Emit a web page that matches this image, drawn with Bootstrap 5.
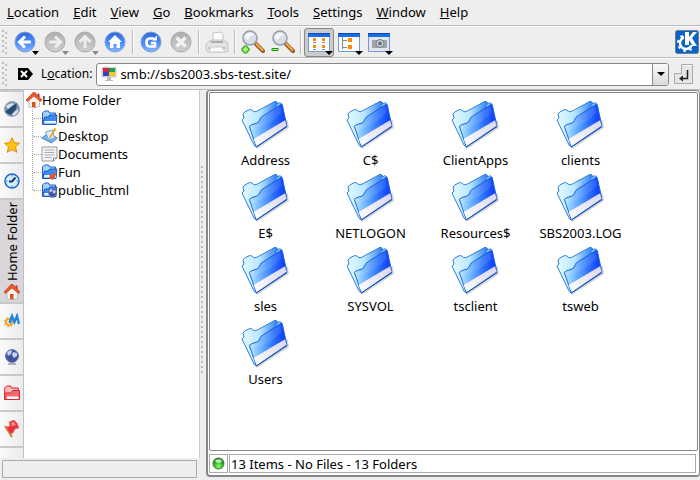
<!DOCTYPE html>
<html lang="en">
<head>
<meta charset="utf-8">
<meta name="viewport" content="width=device-width, initial-scale=1">
<title>smb://sbs2003.sbs-test.site/ - Konqueror</title>
<link href="https://cdn.jsdelivr.net/npm/bootstrap@5.3.0/dist/css/bootstrap.min.css" rel="stylesheet">
<style>
body{font:13px/18px "Noto Sans","Open Sans",sans-serif;color:#000;background:#eeeeee}
button{font:inherit;color:inherit;background:none;border:0;padding:0}
svg{display:block;flex:none}
a{color:inherit;text-decoration:none}
.menubar{gap:14px;padding:3px 7px 4px;border-bottom:1px solid #bbb;background:#eee}
.bar{border-top:1px solid #fafafa;border-bottom:1px solid #bbb}
.toolbar-main{height:32px}
.place{height:32px}
.grip{width:6px;margin:3px 2px;background:radial-gradient(circle at 1px 1px,#bbb 1px,transparent 1px) 0 0/6px 5px,radial-gradient(circle at 4px 3px,#c4c4c4 1px,transparent 1px) 0 0/6px 5px}
.tool{width:30px;height:29px;border-radius:3px;border:1px solid transparent;display:flex;align-items:center;justify-content:center}
.tool.pressed{background:#ccc;border-color:#888}
.rule{width:2px;height:24px;margin:0 2px;border-left:1px solid #bbb;border-right:1px solid #fafafa}
.kde{margin-right:1px}
.combo{height:23px;border:1px solid #888;border-radius:3px;background:#fff}
.combo input{border:0;outline:0;background:transparent;min-width:0;padding:0 0 0 3px;font:inherit;color:inherit}
.combo button{width:16px;background:linear-gradient(#fafafa,#dcdadc);border-left:1px solid #888}
.enter{margin:0 6px 0 5px}
.small-label{font-size:12px}
.pane-area{min-height:0}
.tabs{width:24px;border-right:1px solid #c0c0c0}
.tab{width:23px;height:36px;border-top:2px solid #c9c7c9;background:linear-gradient(90deg,#fafafa,#eceaec);display:flex;align-items:center;justify-content:center}
.tab.open{height:104px;background:#d8d6d8;gap:2px;flex-direction:column}
.tab.open span{writing-mode:vertical-rl;transform:rotate(180deg);line-height:18px}
.left-pane{width:200px}
.tree{background:#fff;padding:1px 0 0 2px;border-right:1px solid #ccc}
.tree ul{margin:0 0 0 6px;padding:0;list-style:none;border-left:1px dotted #aaa;height:81px}
.tree li{height:18px}
.tree li::before{content:"";width:8px;border-top:1px dotted #aaa}
.left-status{height:19px;margin:2px 3px 2px 2px;border:1px solid #aaa;border-radius:1px}
.splitter{width:6px;background:radial-gradient(circle at 2px 1px,#bbb 1px,transparent 1px) 0 0/6px 5px;margin:76px 0 104px}
.right-pane{border:1px solid #888;border-bottom-width:2px;border-left-width:2px;border-radius:4px;background:#fff;padding:1px;margin-bottom:3px}
.files{border:1px solid #888;border-radius:2px;padding:5px 3px;overflow:auto}
.file{width:105px}
.file svg{margin-bottom:1px}
.file span{margin-bottom:2px}
.state{gap:1px;margin:3px 2px 1px 0}
.cell{height:19px;border:1px solid #aaa;padding:0 1px}
.cell.lamp{padding:0 2px}
</style>
</head>
<body class="vh-100 d-flex flex-column overflow-hidden">
<svg width="0" height="0" class="position-absolute" aria-hidden="true">
<defs>
<linearGradient id="blue" x1="0" y1="0" x2="0" y2="1"><stop offset="0" stop-color="#2f66d8"/><stop offset=".55" stop-color="#4a8cff"/><stop offset="1" stop-color="#83b5ff"/></linearGradient>
<linearGradient id="grey" x1="0" y1="0" x2="0" y2="1"><stop offset="0" stop-color="#adadad"/><stop offset="1" stop-color="#d0d0d0"/></linearGradient>
<linearGradient id="fold" x1="0" y1=".5" x2="1" y2=".5"><stop offset="0" stop-color="#bdeaff"/><stop offset=".3" stop-color="#6fb4ff"/><stop offset=".65" stop-color="#2b70fb"/><stop offset="1" stop-color="#0732ff"/></linearGradient>
<linearGradient id="back" x1="0" y1="0" x2="1" y2="0"><stop offset="0" stop-color="#e4fbff"/><stop offset=".5" stop-color="#b8e6ff"/><stop offset="1" stop-color="#2c7df0"/></linearGradient>
<linearGradient id="band" x1="0" y1="1" x2="1" y2="0"><stop offset="0" stop-color="#fff"/><stop offset="1" stop-color="#d9d5ea"/></linearGradient>
<radialGradient id="led" cx=".5" cy=".75" r=".7"><stop offset="0" stop-color="#8dff6a"/><stop offset=".6" stop-color="#2fae22"/><stop offset="1" stop-color="#0b6a08"/></radialGradient>
<symbol id="folder" viewBox="117 42 156 156">
<path d="M140 140L168 195L264 132L260 108Z" fill="#777" opacity=".3"/>
<path d="M123 108L129 102L126 90Q128 84 145 77Q152 75 157 82Q162 85 169 81L222 52L228 54L231 62L166 188L160 185Z" fill="url(#back)" stroke="#2d7fdc" stroke-width="3"/>
<path d="M224 64L236 56L243 60L246 75L230 80Z" fill="#8ccaff" stroke="#1f67d4" stroke-width="2.5"/>
<path d="M166 189L145 127Q148 122 168 117Q175 113 178 103Q180 98 187 95L240 61L244 64L258 127Z" fill="url(#fold)" stroke="#1c66d8" stroke-width="3"/>
<path d="M158 165L252 109L257 125L167 186Z" fill="url(#band)"/>
<path d="M185 99L238 66L242 85Q215 120 152 138L149 128Q170 121 176 116Z" fill="#fff" opacity=".1"/>
<path d="M166 189L258 128" stroke="#1c50b8" stroke-width="3"/>
</symbol>
<symbol id="minifolder" viewBox="0 0 16 16"><path d="M1 14V3L3 1h4l1 2h6v3" fill="#a7d4ff" stroke="#1c5fc8"/><path d="M1 14.500L3 7h4l1-2h7.500L14.500 14.500Z" fill="#3c8aef" stroke="#1b59c4"/><path d="M3 11h11.500v2.500H2.500z" fill="#eef4ff"/></symbol>
<symbol id="house" viewBox="0 0 16 16"><path d="M3 8v7l4 1 6.500-1.500V8L8 2z" fill="#f8f6f4" stroke="#aaa" stroke-width=".7"/><path d="M11.500 1.500h2v4h-2z" fill="#c33"/><path d="M0 8L7 .5 9 .5 16 8 14.500 9.500 8 4 1.500 9.500z" fill="#f0572a" stroke="#b83212" stroke-width=".6"/><path d="M6 10h3.500v5.700L6 15z" fill="#d75418"/></symbol>
<symbol id="globe" viewBox="0 0 16 16"><circle cx="8" cy="7" r="6.500" fill="#3c559d" stroke="#7181b4"/><path d="M3 4Q6 0 8 2L7 5 4 7zM9 3l4 1 0 3-3 2-2-3z" fill="#c8d4f2"/><path d="M4 15h8" stroke="#999" stroke-width="1.500"/></symbol>
<symbol id="lens" viewBox="0 0 24 24"><path d="M15 14L22 21" stroke="#8e5b2e" stroke-width="4" stroke-linecap="round"/><path d="M15.500 14L21.500 20" stroke="#ffad45" stroke-width="2" stroke-linecap="round"/><circle cx="9" cy="8" r="7" fill="#d9dfe8" stroke="#999da8" stroke-width="1.500"/><path d="M4 8a5 5 0 0 1 9-3Q9 5 7 10z" fill="#fff" opacity=".8"/></symbol>
<symbol id="window" viewBox="0 0 24 24"><path d="M1.500 2.500h21v18h-21z" fill="#fafcff" stroke="#6f9bd8"/><path d="M1 2h22v4H1z" fill="#1b6ae6"/><path d="M1 2h22v1H1z" fill="#0b48b8"/></symbol>
<symbol id="arrow" viewBox="0 0 8 4"><path d="M0 0h8L4 4z"/></symbol>
</defs>
</svg>

<nav class="menubar d-flex flex-shrink-0" aria-label="Menu">
<button type="button"><u>L</u>ocation</button><button type="button"><u>E</u>dit</button><button type="button"><u>V</u>iew</button><button type="button"><u>G</u>o</button><button type="button"><u>B</u>ookmarks</button><button type="button"><u>T</u>ools</button><button type="button"><u>S</u>ettings</button><button type="button"><u>W</u>indow</button><button type="button"><u>H</u>elp</button>
</nav>

<div class="bar toolbar-main d-flex align-items-center flex-shrink-0" role="toolbar" aria-label="Main toolbar">
<div class="grip align-self-stretch"></div>
<button type="button" class="tool" aria-label="Back"><svg width="28" height="26" viewBox="0 0 28 26"><circle cx="14" cy="13" r="10" fill="url(#blue)" stroke="#7d9fd8"/><path d="M20 13H9M14 7.500L8.500 13l5.500 5.500" fill="none" stroke="#fff" stroke-width="3"/><path d="M21 22h7l-3.500 4z"/></svg></button>
<button type="button" class="tool" aria-label="Forward" disabled><svg width="28" height="26" viewBox="0 0 28 26"><circle cx="14" cy="13" r="10" fill="url(#grey)" stroke="#aaa"/><path d="M8 13h11M14 7.500l5.500 5.500-5.500 5.500" fill="none" stroke="#eee" stroke-width="3"/><path d="M21 22h7l-3.500 4z" fill="#888"/></svg></button>
<button type="button" class="tool" aria-label="Up" disabled><svg width="28" height="26" viewBox="0 0 28 26"><circle cx="14" cy="13" r="10" fill="url(#grey)" stroke="#aaa"/><path d="M14 19V8M8.500 13L14 7.500l5.500 5.500" fill="none" stroke="#eee" stroke-width="3"/><path d="M21 22h7l-3.500 4z" fill="#888"/></svg></button>
<button type="button" class="tool" aria-label="Home"><svg width="28" height="26" viewBox="0 0 28 26"><circle cx="14" cy="13" r="10" fill="url(#blue)" stroke="#7d9fd8"/><path d="M14 6l7 7h-2v6h-3.500v-4h-3v4H9v-6H7z" fill="#fff"/></svg></button>
<div class="rule"></div>
<button type="button" class="tool" aria-label="Reload"><svg width="28" height="26" viewBox="0 0 28 26"><circle cx="14" cy="13" r="10" fill="url(#blue)" stroke="#7d9fd8"/><path d="M17 9.500H12.500Q9.500 9.500 9.500 13.500T13 17.500h5V14h-4" fill="none" stroke="#fff" stroke-width="2.600"/><path d="M20 6.500v5h-5z" fill="#fff"/></svg></button>
<button type="button" class="tool" aria-label="Stop" disabled><svg width="28" height="26" viewBox="0 0 28 26"><circle cx="14" cy="13" r="10" fill="url(#grey)" stroke="#aaa"/><path d="M9.500 8.500l9 9M18.500 8.500l-9 9" stroke="#f2f2f2" stroke-width="3.500"/></svg></button>
<div class="rule"></div>
<button type="button" class="tool" aria-label="Print" disabled><svg width="24" height="24" viewBox="0 0 24 24"><path d="M8 11V3l8-1 2 2v8" fill="#fafafa" stroke="#c4c4c4"/><path d="M4 11l3-1h11l4 2 1 3v6l-2 1H3l-2-2v-5z" fill="#e3e3e3" stroke="#c4c4c4"/><path d="M6 12h12" stroke="#999" stroke-width="1.500"/><path d="M3 17h18v2H3z" fill="#c6c6c6"/><path d="M6 17h11l3 5H4z" fill="#fafafa" stroke="#ccc"/></svg></button>
<div class="rule"></div>
<button type="button" class="tool" aria-label="Zoom in"><svg width="24" height="24" viewBox="0 0 24 24"><use href="#lens"/><path d="M3 16h3v2h2v3H6v2H3v-2H1v-3h2z" fill="#b7ff78" stroke="#12990b"/></svg></button>
<button type="button" class="tool" aria-label="Zoom out"><svg width="24" height="24" viewBox="0 0 24 24"><use href="#lens"/><path d="M1 18.500h6v2H1z" fill="#b7ff78" stroke="#12990b"/></svg></button>
<div class="rule"></div>
<button type="button" class="tool pressed" aria-label="Icon view" aria-pressed="true"><svg width="28" height="26" viewBox="0 0 28 26"><svg x="2" y="2" width="24" height="24"><use href="#window"/></svg><path d="M8 9h3v3H8zM17 9h3v3h-3zM8 16h3v3H8zM17 16h3v3h-3z" fill="#ff8a0a"/><path d="M8 13.500h3M17 13.500h3M8 20.500h3M17 20.500h3" stroke="#888"/><path d="M20 22h8l-4 4z"/></svg></button>
<button type="button" class="tool" aria-label="Tree view"><svg width="28" height="26" viewBox="0 0 28 26"><svg x="2" y="2" width="24" height="24"><use href="#window"/></svg><path d="M7.500 8v12M7.500 11.500H12M7.500 18.500H12" fill="none" stroke="#888"/><path d="M13 9h4v4h-4zM13 16h4v4h-4z" fill="#ff8a0a"/><path d="M20 22h8l-4 4z"/></svg></button>
<button type="button" class="tool" aria-label="Photo view"><svg width="28" height="26" viewBox="0 0 28 26"><svg x="2" y="2" width="24" height="24"><use href="#window"/></svg><path d="M4 8h20v14H4z" fill="#e4e6ea"/><path d="M7 11h15v8H7z" fill="#a2a6ac"/><circle cx="15" cy="14.500" r="4" fill="#cfd6e0" stroke="#777"/><circle cx="15" cy="14.500" r="2" fill="#5c7190"/><path d="M20 22h8l-4 4z"/></svg></button>
<svg class="kde ms-auto" width="24" height="24" viewBox="0 0 24 24" role="img" aria-label="KDE"><rect x=".5" y=".5" width="23" height="23" rx="2" fill="#0a63c8" stroke="#6f7f91"/><circle cx="11" cy="13" r="6" fill="none" stroke="#fff" stroke-width="2.500"/><circle cx="11" cy="13" r="8" fill="none" stroke="#fff" stroke-width="2" stroke-dasharray="2.600 3.700"/><path d="M9 1h13v14H9z" fill="#0a63c8"/><path d="M10 2h4v5l4-5h4l-5 6 5 8h-4l-4-6v5h-4z" fill="#fff"/></svg>
</div>

<div class="bar place d-flex align-items-center flex-shrink-0">
<div class="grip align-self-stretch"></div>
<button type="button" class="ms-2" aria-label="Clear location"><svg width="15" height="12" viewBox="0 0 15 12"><path d="M0 0h10l5 6-5 6H0z"/><path d="M3 3l6 6M9 3L3 9" stroke="#fff" stroke-width="2"/></svg></button>
<label for="url" class="small-label ms-2 me-1">L<u>o</u>cation:</label>
<div class="combo d-flex flex-fill align-items-center overflow-hidden">
<svg class="ms-1" width="16" height="16" viewBox="0 0 16 16"><path d="M1 2Q4 0 8 1.500T15 1v10H1z" fill="#ddd" stroke="#aaa" stroke-width=".6"/><path d="M2 2h6v4H2z" fill="#d2214c"/><path d="M8 2h6v4H8z" fill="#18a04a"/><path d="M2 6h6v4H2z" fill="#3046c4"/><path d="M8 6h6v4H8z" fill="#f2c916"/><path d="M6 11h4v3H6zM4 14h8v1H4z" fill="#bbb"/></svg>
<input id="url" class="flex-fill" type="text" value="smb://sbs2003.sbs-test.site/">
<button type="button" class="align-self-stretch d-flex align-items-center justify-content-center" aria-label="History"><svg width="8" height="4"><use href="#arrow"/></svg></button>
</div>
<button type="button" class="enter" aria-label="Go"><svg width="20" height="20" viewBox="0 0 20 20"><path d="M7.500.5h11v19H.5v-10h7z" fill="#e6e4e6" stroke="#aaa"/><path d="M8.500 1.500h9" fill="none" stroke="#fff"/><path d="M13.500 6v8.500H7" fill="none" stroke="#222" stroke-width="1.500"/><path d="M5 14.500l4-3v6z" fill="#222"/></svg></button>
</div>

<main class="pane-area d-flex flex-fill overflow-hidden">
<section class="left-pane d-flex flex-column flex-shrink-0">
<div class="d-flex flex-fill overflow-hidden">
<div class="tabs flex-shrink-0 overflow-hidden">
<button type="button" class="tab" aria-label="Konqueror"><svg width="16" height="16" viewBox="0 0 16 16"><circle cx="8" cy="8" r="7.500" fill="#7792b3" stroke="#9aa6b5"/><path d="M1 11L7 6l6-4-1 6-5 6z" fill="#294a70"/><path d="M2 5q5-4 8-2L4 8zM8 13l6-5v3l-4 4z" fill="#d6e3ef"/></svg></button>
<button type="button" class="tab" aria-label="Bookmarks"><svg width="16" height="16" viewBox="0 0 16 16"><path d="M8 .7l2.200 5 5.300.5-4 3.600 1.200 5.500L8 12.500l-4.700 2.800 1.200-5.500-4-3.600 5.300-.5z" fill="#ffc414" stroke="#e58a13"/></svg></button>
<button type="button" class="tab" aria-label="History"><svg width="16" height="16" viewBox="0 0 16 16"><circle cx="8" cy="8" r="7" fill="#d2efff" stroke="#2366c8" stroke-width="1.500"/><path d="M11.500 4.500L8 8.500H5" fill="none" stroke="#123a72" stroke-width="2"/><path d="M8 2v1.500M8 12.500V14M2 8h1.500M12.500 8H14" stroke="#3878ce"/></svg></button>
<button type="button" class="tab open"><span>Home Folder</span><svg width="16" height="16"><use href="#house"/></svg></button>
<button type="button" class="tab" aria-label="Metabar"><svg width="16" height="16" viewBox="0 0 16 16"><circle cx="5" cy="9" r="3" fill="none" stroke="#f5a52c" stroke-width="2"/><circle cx="5" cy="9" r="4.500" fill="none" stroke="#f5a52c" stroke-width="1.500" stroke-dasharray="1.500 2"/><path d="M5.500 10L8 3l2.500 6L13 3l2 8" fill="none" stroke="#1f86e0" stroke-width="2.400"/></svg></button>
<button type="button" class="tab" aria-label="Network"><svg width="16" height="16"><use href="#globe"/></svg></button>
<button type="button" class="tab" aria-label="Root folder"><svg width="16" height="16" viewBox="0 0 16 16"><path d="M.7 14.500V3l2-2h4l1 2h6.500v3" fill="#ffb8b8" stroke="#d62230"/><path d="M.7 14.500V8h6l2-2.500h6.800v9z" fill="#f06a70" stroke="#d62230"/><path d="M3 11.500h11.500v2.500H3z" fill="#fff"/></svg></button>
<button type="button" class="tab" aria-label="Services"><svg width="16" height="18" viewBox="0 0 16 18"><path d="M1 6l7 11" stroke="#c58a2a" stroke-width="2"/><path d="M5 2l5-2 3 3 2 5-4 1-2 4-3 1-4-7 4-1z" fill="#ee3038" stroke="#d98080" stroke-width=".7"/><path d="M7 3l3-1 2 3-4 1z" fill="#ff9090"/></svg></button>
<div class="tab"></div>
</div>
<div class="tree flex-fill">
<a href="#home" class="d-flex align-items-center"><svg width="16" height="16" class="flex-shrink-0"><use href="#house"/></svg>Home Folder</a>
<ul>
<li class="d-flex align-items-center"><a href="#bin" class="d-flex align-items-center"><svg width="17" height="16"><use href="#minifolder"/></svg>bin</a></li>
<li class="d-flex align-items-center"><a href="#desktop" class="d-flex align-items-center"><svg width="17" height="16" viewBox="0 0 16 16"><path d="M0 10l7-5 9 5-6 5z" fill="#6fb2f5" stroke="#4f8fd8"/><path d="M4 4l7-2 2 8-6 2z" fill="#d8edff" stroke="#7ab"/><path d="M13 0L8 9l-1 2 2-1 6-9z" fill="#f39a1c"/></svg>Desktop</a></li>
<li class="d-flex align-items-center"><a href="#documents" class="d-flex align-items-center"><svg width="17" height="16" viewBox="0 0 16 16"><path d="M.5 1h15v11l-3 3H.5z" fill="#f4f4f6" stroke="#999"/><path d="M3 4h10M3 6.500h10M3 9h10M3 11.500h7" stroke="#aab"/><path d="M12 15v-3h3.500" fill="#fff" stroke="#888"/></svg>Documents</a></li>
<li class="d-flex align-items-center"><a href="#fun" class="d-flex align-items-center"><svg width="17" height="16" viewBox="0 0 16 16"><use href="#minifolder"/><path d="M8 10l3 1 4-3-1 4-3 4-3-2z" fill="#f0502a"/></svg>Fun</a></li>
<li class="d-flex align-items-center"><a href="#public" class="d-flex align-items-center"><svg width="17" height="16" viewBox="0 0 16 16"><use href="#minifolder"/><svg x="6" y="6" width="10" height="10"><use href="#globe"/></svg></svg>public_html</a></li>
</ul>
</div>
</div>
<div class="left-status"></div>
</section>
<div class="splitter flex-shrink-0"></div>
<section class="right-pane d-flex flex-column flex-fill">
<div class="files d-flex flex-wrap align-content-start flex-fill">
<a href="#f1" class="file d-flex flex-column align-items-center"><svg width="52" height="52"><use href="#folder"/></svg><span>Address</span></a>
<a href="#f2" class="file d-flex flex-column align-items-center"><svg width="52" height="52"><use href="#folder"/></svg><span>C$</span></a>
<a href="#f3" class="file d-flex flex-column align-items-center"><svg width="52" height="52"><use href="#folder"/></svg><span>ClientApps</span></a>
<a href="#f4" class="file d-flex flex-column align-items-center"><svg width="52" height="52"><use href="#folder"/></svg><span>clients</span></a>
<a href="#f5" class="file d-flex flex-column align-items-center"><svg width="52" height="52"><use href="#folder"/></svg><span>E$</span></a>
<a href="#f6" class="file d-flex flex-column align-items-center"><svg width="52" height="52"><use href="#folder"/></svg><span>NETLOGON</span></a>
<a href="#f7" class="file d-flex flex-column align-items-center"><svg width="52" height="52"><use href="#folder"/></svg><span>Resources$</span></a>
<a href="#f8" class="file d-flex flex-column align-items-center"><svg width="52" height="52"><use href="#folder"/></svg><span>SBS2003.LOG</span></a>
<a href="#f9" class="file d-flex flex-column align-items-center"><svg width="52" height="52"><use href="#folder"/></svg><span>sles</span></a>
<a href="#f10" class="file d-flex flex-column align-items-center"><svg width="52" height="52"><use href="#folder"/></svg><span>SYSVOL</span></a>
<a href="#f11" class="file d-flex flex-column align-items-center"><svg width="52" height="52"><use href="#folder"/></svg><span>tsclient</span></a>
<a href="#f12" class="file d-flex flex-column align-items-center"><svg width="52" height="52"><use href="#folder"/></svg><span>tsweb</span></a>
<a href="#f13" class="file d-flex flex-column align-items-center"><svg width="52" height="52"><use href="#folder"/></svg><span>Users</span></a>
</div>
<footer class="state d-flex">
<div class="cell lamp d-flex align-items-center"><svg width="13" height="13" viewBox="0 0 13 13"><circle cx="6.500" cy="6.500" r="5.500" fill="url(#led)" stroke="#3b7a38"/><ellipse cx="6.500" cy="4" rx="3.200" ry="1.800" fill="#e4ffe0" opacity=".8"/></svg></div>
<div class="cell flex-fill d-flex align-items-center">13 Items - No Files - 13 Folders</div>
</footer>
</section>
</main>
<script src="https://cdn.jsdelivr.net/npm/bootstrap@5.3.0/dist/js/bootstrap.bundle.min.js"></script>
</body>
</html>
